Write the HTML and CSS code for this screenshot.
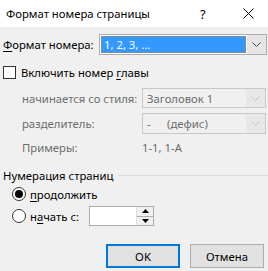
FILE: index.html
```
<!DOCTYPE html>
<html lang="ru">
<head>
    <meta charset="UTF-8">
    <title>Формат номера страницы</title>
    <link rel="stylesheet" href="styles.css">
</head>
<body>
<div class="dialog">
    <div class="titlebar">
        <span class="title">Формат номера страницы</span>
        <span class="help">?</span>
        <svg class="close" width="11" height="11" viewBox="0 0 11 11">
            <path d="M0.5 0.5 L10.5 10.5 M10.5 0.5 L0.5 10.5" stroke="#000" stroke-width="1"/>
        </svg>
    </div>

    <div class="content">
        <div class="format-row">
            <span class="label"><u>Ф</u>ормат номера:</span>
            <div class="combo">
                <div class="combo-text selected"><span class="focus">1, 2, 3, ...</span></div>
                <div class="combo-btn">
                    <svg width="9" height="5" viewBox="0 0 9 5"><path d="M0.5 0.5 L4.5 4.5 L8.5 0.5" fill="none" stroke="#444"/></svg>
                </div>
            </div>
        </div>

        <div class="check-row">
            <span class="checkbox"></span>
            <span>Включить номер <u>г</u>лавы</span>
        </div>

        <div class="chapter">
            <div class="grid-row row-style">
                <span class="muted">начинается со стиля:</span>
                <div class="combo disabled">
                    <div class="combo-text">Заголовок 1</div>
                    <div class="combo-btn">
                        <svg width="9" height="5" viewBox="0 0 9 5"><path d="M0.5 0.5 L4.5 4.5 L8.5 0.5" fill="none" stroke="#c4c4c4"/></svg>
                    </div>
                </div>
            </div>
            <div class="grid-row row-sep">
                <span class="muted">разделитель:</span>
                <div class="combo disabled">
                    <div class="combo-text"><span class="dash">-</span>(дефис)</div>
                    <div class="combo-btn">
                        <svg width="9" height="5" viewBox="0 0 9 5"><path d="M0.5 0.5 L4.5 4.5 L8.5 0.5" fill="none" stroke="#c4c4c4"/></svg>
                    </div>
                </div>
            </div>
            <div class="grid-row row-examples">
                <span class="muted">Примеры:</span>
                <span class="muted">1-1, 1-А</span>
            </div>
        </div>

        <div class="group-head">
            <span>Нумерация страниц</span>
            <span class="group-line"></span>
        </div>

        <div class="radio-row first">
            <span class="radio checked"></span>
            <span><u>п</u>родолжить</span>
        </div>
        <div class="radio-row second">
            <span class="radio"></span>
            <span class="start-label">н<u>а</u>чать с:</span>
            <div class="spin">
                <div class="spin-field"></div>
                <div class="spin-btns">
                    <div class="spin-btn"><svg width="7" height="4" viewBox="0 0 7 4"><path d="M3.5 0 L7 4 L0 4 Z" fill="#000"/></svg></div>
                    <div class="spin-btn"><svg width="7" height="4" viewBox="0 0 7 4"><path d="M0 0 L7 0 L3.5 4 Z" fill="#000"/></svg></div>
                </div>
            </div>
        </div>

        <div class="buttons">
            <button class="btn default">OK</button>
            <button class="btn">Отмена</button>
        </div>
    </div>
</div>
</body>
</html>
```

FILE: styles.css
```
html, body {
    margin: 0;
    padding: 0;
}
body {
    font-family: "Noto Sans", "Open Sans", sans-serif;
    font-size: 11.3px;
    color: #000;
    background: #f0f0f0;
    white-space: nowrap;
}
u {
    text-decoration-thickness: 1px;
    text-underline-offset: 2px;
}
.dialog {
    width: 268px;
    height: 271px;
    overflow: hidden;
}
.titlebar {
    height: 27px;
    background: #fff;
    display: flex;
    align-items: center;
    padding-left: 6px;
}
.title {
    flex: 1;
}
.help {
    font-size: 13px;
    width: 43px;
}
.close {
    margin-right: 14px;
}
.content {
    height: 244px;
    background: #f0f0f0;
}
.format-row {
    margin-top: 7px;
    height: 21px;
    display: flex;
    align-items: center;
    padding-left: 3px;
}
.format-row .label {
    width: 96px;
}
.combo {
    flex: 1;
    height: 21px;
    box-sizing: border-box;
    border: 1px solid #adadad;
    background: #fff;
    display: flex;
    margin-right: 1px;
}
.combo-text {
    flex: 1;
    display: flex;
    align-items: center;
    padding-left: 4px;
}
.combo-text.selected {
    background: #3399ff;
    color: #fff;
    margin: 1px;
    padding-left: 0;
}
.focus {
    flex: 1;
    height: 100%;
    box-sizing: border-box;
    border: 1px dotted #c08030;
    padding-left: 2px;
    display: flex;
    align-items: center;
}
.combo-btn {
    width: 19px;
    background: #e5e5e5;
    display: flex;
    align-items: center;
    justify-content: center;
}
.combo.disabled {
    background: #f0f0f0;
    border-color: #c8c8c8;
    color: #6d6d6d;
}
.combo.disabled .combo-btn {
    background: #e8e8e8;
}
.check-row {
    margin-top: 8px;
    height: 18px;
    display: flex;
    align-items: center;
    padding-left: 3px;
}
.checkbox {
    width: 13px;
    height: 13px;
    box-sizing: border-box;
    border: 1px solid #333;
    background: #fff;
    margin-right: 5px;
}
.chapter {
    padding-left: 22px;
}
.grid-row {
    display: grid;
    grid-template-columns: 120px 1fr;
    align-items: center;
}
.row-style {
    margin-top: 7px;
    height: 20px;
}
.row-style .combo,
.row-sep .combo {
    height: 100%;
    margin-right: 2px;
}
.row-sep {
    margin-top: 5px;
    height: 21px;
}
.row-examples {
    margin-top: 4px;
    height: 18px;
}
.muted {
    color: #6d6d6d;
}
.dash {
    display: inline-block;
    width: 20px;
}
.group-head {
    margin-top: 10px;
    height: 18px;
    display: flex;
    align-items: center;
    padding-left: 3px;
}
.group-line {
    flex: 1;
    height: 1px;
    background: #dcdcdc;
    margin-left: 5px;
}
.radio-row {
    display: flex;
    align-items: center;
    padding-left: 12px;
}
.radio-row.first {
    margin-top: 1px;
    height: 18px;
}
.radio-row.second {
    margin-top: 3px;
    height: 20px;
}
.radio {
    width: 14px;
    height: 14px;
    box-sizing: border-box;
    border: 1px solid #333;
    border-radius: 50%;
    background: #fff;
    margin-right: 4px;
    display: flex;
    align-items: center;
    justify-content: center;
}
.radio.checked::after {
    content: "";
    width: 8px;
    height: 8px;
    border-radius: 50%;
    background: #000;
}
.start-label {
    width: 59px;
}
.spin {
    width: 65px;
    height: 20px;
    box-sizing: border-box;
    border: 1px solid #adadad;
    background: #fff;
    display: flex;
}
.spin-field {
    flex: 1;
}
.spin-btns {
    width: 16px;
    display: flex;
    flex-direction: column;
    border-left: 1px solid #dcdcdc;
}
.spin-btn {
    flex: 1;
    display: flex;
    align-items: center;
    justify-content: center;
    background: #f0f0f0;
}
.spin-btn:first-child {
    border-bottom: 1px solid #adadad;
}
.buttons {
    margin-top: 18px;
    display: flex;
    gap: 10px;
    padding-left: 106px;
}
.btn {
    width: 74px;
    height: 24px;
    box-sizing: border-box;
    border: 1px solid #adadad;
    background: #e1e1e1;
    font-family: inherit;
    font-size: 11.3px;
    color: #000;
    padding: 0;
}
.btn.default {
    border: 2px solid #0078d7;
}
```
